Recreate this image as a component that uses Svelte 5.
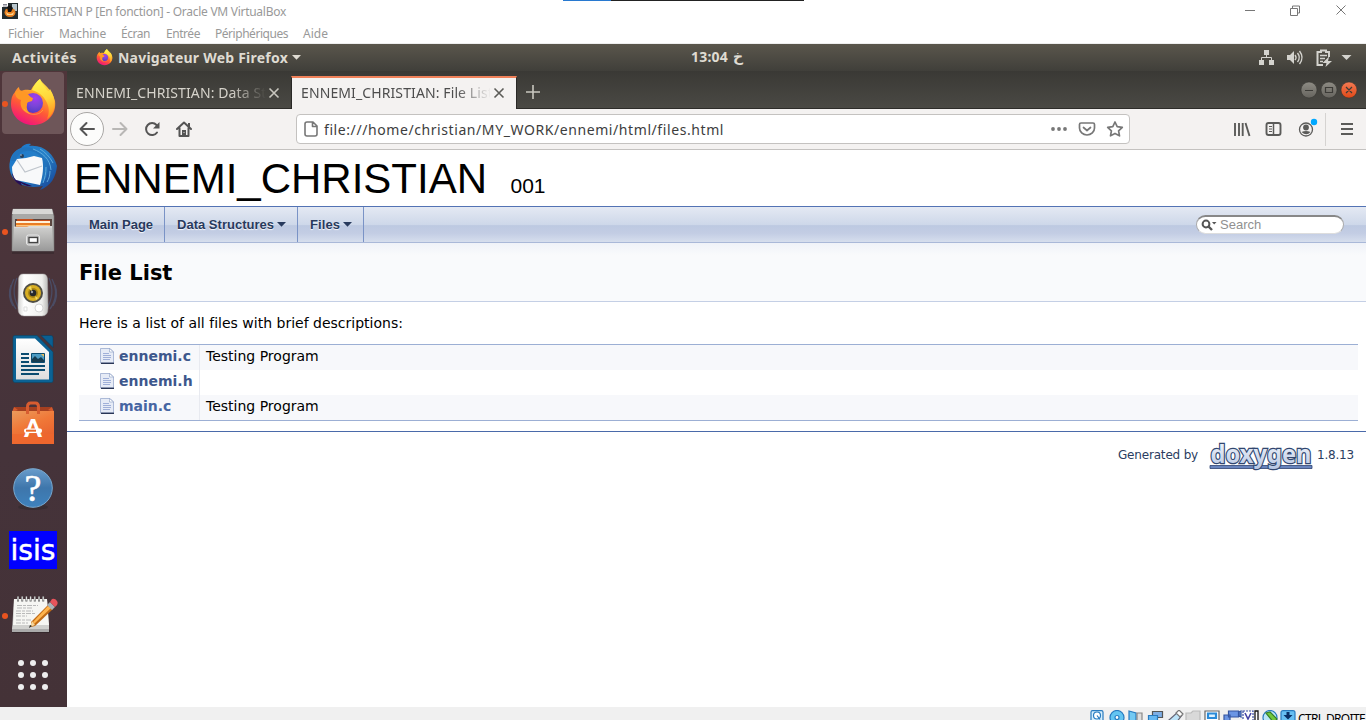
<script>
  const menus = [
    ['Fichier', 36, 8], ['Machine', 47, 15], ['Écran', 29, 15],
    ['Entrée', 34, 16], ['Périphériques', 73, 15], ['Aide', 25, 15]
  ];
  const files = [
    { name: 'ennemi.c', brief: 'Testing Program' },
    { name: 'ennemi.h', brief: '' },
    { name: 'main.c', brief: 'Testing Program', visited: true }
  ];
  const dock = ['firefox', 'thunderbird', 'files', 'rhythmbox', 'writer', 'software', 'help', 'isis', 'notes'];
  const running = ['firefox', 'files', 'notes'];

  // Spreads the letters of a label so that it takes the given width.
  function fit(node, width) {
    const natural = node.getBoundingClientRect().width;
    const count = [...node.textContent].length;
    node.style.letterSpacing = `${(width - natural) / count}px`;
  }
</script>

{#snippet firefox()}
  <defs>
    <linearGradient id="fx-body" x1=".8" y1="0" x2=".35" y2="1">
      <stop offset="0" stop-color="#fff44f" /><stop offset=".35" stop-color="#ffa52a" />
      <stop offset=".65" stop-color="#ff5a36" /><stop offset="1" stop-color="#f0127c" />
    </linearGradient>
    <linearGradient id="fx-flame" x1=".5" y1="0" x2=".7" y2="1">
      <stop offset="0" stop-color="#fff44f" /><stop offset=".5" stop-color="#ffd53a" /><stop offset="1" stop-color="#ff8a1d" />
    </linearGradient>
    <radialGradient id="fx-globe" cx=".6" cy=".25" r=".8">
      <stop offset="0" stop-color="#a43cf0" /><stop offset=".5" stop-color="#7a45d8" /><stop offset="1" stop-color="#4e3bc2" />
    </radialGradient>
  </defs>
  <path fill="url(#fx-body)" d="M6 13c1-2 2-4 4-5 0 2 1 3 2 4 4-2 8-1 10-1 2-4 5-8 9-11 2 5 12 9 15 22 2 14-9 24-22 24C11 46 2 36 2 25c0-5 1-9 4-12z" />
  <path fill="url(#fx-flame)" d="M23 11c2-5 5-9 8-11 1 5 5 7 7 11 2 2 2 1 3-1 7 11 6 24-3 30 3-7 2-13-1-18-3-6-8-9-14-11z" />
  <circle cx="24" cy="24" r="10" fill="url(#fx-globe)" />
  <path fill="#ff9825" d="M6 13c4-3 9-1 12 1 2 3 5 5 6 5l-1 3c-2 1-5 0-5 4-1 4 1 7 4 9-8-1-12-8-10-14-4-1-6-4-6-8z" />
  <path fill="none" stroke="#ffb83b" stroke-width="1" opacity=".6" d="M15 30c3 6 14 8 19 1" />
{/snippet}

{#snippet thunderbird()}
  <defs><linearGradient id="tb" x1="0" y1="0" x2="1" y2="1">
    <stop offset="0" stop-color="#1b77cc" /><stop offset=".5" stop-color="#2680c7" /><stop offset="1" stop-color="#163f92" />
  </linearGradient></defs>
  <path fill="url(#tb)" d="M12 5C14 2 18 0 22 1l-2 2c14-2 25 8 28 20-1 11-6 20-17 24l3-4c-9 2-17 1-25-3C2 35-1 26 1 18 2 12 6 7 12 5z" />
  <path fill="#270e55" d="M3 30l7 8 13 5c-4 1-8-1-11-3l1 3C7 40 4 36 3 30z" />
  <path fill="#2174bd" d="M7 18c1-5 4-9 10-10 8-1 17 4 17 14 0 8-1 14-4 20 14-7 11-30-8-37C14 2 4 7 2 18z" />
  <path fill="none" stroke="#5fa9db" stroke-width="1" d="M24 6c10 4 17 10 18 21M31 6c5 3 10 8 13 14M37 24c0 6-1 11-3 16M41 28c0 4-1 8-3 11" />
  <path fill="#f8f9fa" d="M3 24l5-8 9-1 8-2 8 2c2 8 1 18-2 27L7 37C4 34 3 29 3 24z" />
  <path fill="none" stroke="#bfc5cc" stroke-width="1.200" d="M8 17l8 12 17-6" />
  <circle cx="13" cy="13" r="2" fill="#273f59" /><circle cx="12" cy="12" r=".7" fill="#d3e4f4" />
{/snippet}

{#snippet filesIcon()}
  <defs><linearGradient id="fl" x1="0" y1="0" x2="0" y2="1">
    <stop offset="0" stop-color="#d2d2d0" /><stop offset="1" stop-color="#999" />
  </linearGradient></defs>
  <path fill="#242022" opacity=".35" d="M3 44h42v3H3z" />
  <path fill="#a9a9a7" stroke="#777" stroke-width=".6" d="M4 2h39l2 7v35H3V9z" />
  <path fill="#d8d8d6" d="M4 2h39l1 5H3z" />
  <path fill="#5a4640" d="M6 12h37v10H6z" />
  <path fill="#c84e1a" d="M8 12h15l2 1h16v6H8z" /><path fill="#fff1d8" d="M7 14h34v2H7z" /><path fill="#e97d25" d="M7 16h34v5H7z" /><path fill="#ffc77a" d="M7 18h34v1H7z" />
  <path fill="url(#fl)" d="M5 20h13l2-1h23l1 25H4z" />
  <path fill="none" stroke="#eee" stroke-width=".7" d="M5 20h38" />
  <rect x="17.500" y="28" width="13" height="10" rx="2" fill="#bbb" stroke="#e6e6e6" />
  <rect x="20" y="30.500" width="8.500" height="5" fill="#fff" stroke="#444" stroke-width="1.300" />
{/snippet}

{#snippet rhythmbox()}
  <defs><linearGradient id="rb" x1="0" x2="1"><stop stop-color="#d2d2d0" /><stop offset=".2" stop-color="#fff" /><stop offset=".8" stop-color="#efefed" /><stop offset="1" stop-color="#b9b9b7" /></linearGradient></defs>
  <g fill="none" stroke="#4b648d" stroke-width="1.300" opacity=".5"><path d="M8 7q-7 16 3 32M5 8q-8 16 2 30M2 14q-4 11 2 21M40 7q7 16-3 32M43 8q8 16-2 30M46 14q4 11-2 21" /></g>
  <path fill="url(#rb)" stroke="#aaa" stroke-width=".5" d="M14 3h20q4 0 4.500 5l.5 29q0 8-6 8H15q-6 0-6-8l.5-29Q10 3 14 3z" />
  <circle cx="24" cy="22" r="10" fill="#4f4e46" />
  <circle cx="24" cy="22" r="8" fill="#d8ae22" /><circle cx="24" cy="22" r="5" fill="#a78314" /><circle cx="24" cy="22" r="3.300" fill="#25282c" /><circle cx="23" cy="21" r="1.200" fill="#9fa1a3" />
  <path fill="#f1db63" d="M19 17l4 3-1-5zM29 27l-3-2 1 4z" />
  <circle cx="30" cy="37" r="4" fill="#fff" stroke="#ccc" stroke-width=".8" /><path fill="none" stroke="#ddd" d="M15 36h3v4h-3z" />
{/snippet}

{#snippet writer()}
  <defs><linearGradient id="wr" x1="0" y1="0" x2="0" y2="1"><stop stop-color="#fff" /><stop offset="1" stop-color="#dedede" /></linearGradient></defs>
  <path fill="#0b6294" stroke="#084668" stroke-width=".6" d="M6 .5h22L44 17v29q0 1.500-2 1.500H6q-2 0-2-2V2Q4 .5 6 .5z" />
  <path fill="#0a5f92" stroke="#073d5c" stroke-width=".5" d="M32 .5h10q2 0 2 2v10z" />
  <path fill="url(#wr)" d="M7 3.500h19L40 17v27.500H7z" />
  <g fill="#0b4c70"><path d="M12 18h8v2h-8zM12 22h8v2h-8zM12 26h8v2h-8zM12 30h24v2H12zM12 34h24v2H12zM12 38h18v2H12z" /></g>
  <path fill="#4d9cc4" stroke="#0b4c70" d="M22.500 18.500h13v9h-13z" /><path fill="#173c50" d="M23 27v-3l3-3 3 3 3-2 3 3v2z" /><path fill="#edbd58" d="M32 19h3v3z" />
{/snippet}

{#snippet software()}
  <defs><linearGradient id="sw" x1="0" y1="0" x2=".5" y2="1"><stop stop-color="#eb9b5c" /><stop offset=".5" stop-color="#f07838" /><stop offset="1" stop-color="#e9622e" /></linearGradient></defs>
  <path fill="#a43f20" d="M5 8h38v6H5z" /><path fill="#d35a2d" d="M5 8l4 3-6 2zM43 8l-4 3 6 2z" />
  <path fill="url(#sw)" d="M3 12h42v33H3z" /><path fill="#f0682d" d="M3 35h42v10H3z" opacity=".7" />
  <path fill="none" stroke="#d75c30" stroke-width="3" d="M18.500 15V8q0-4 3-4h5q3 0 3 4v7" />
  <text x="24" y="38" fill="#fff" text-anchor="middle" font-family="Lato" font-size="25" font-weight="900">A</text>
  <rect x="15" y="29.500" width="18" height="4.500" rx="2" fill="#fff" /><path fill="#e86a2d" d="M17 30.700h10v2H17z" />
{/snippet}

{#snippet help()}
  <defs><linearGradient id="hp" x1="0" y1="0" x2="0" y2="1"><stop stop-color="#699ccb" /><stop offset=".5" stop-color="#3e76ab" /><stop offset="1" stop-color="#3e82bd" /></linearGradient></defs>
  <ellipse cx="24" cy="44" rx="15" ry="3" fill="#222" opacity=".35" />
  <circle cx="24" cy="25" r="19.300" fill="url(#hp)" stroke="#79a9cf" stroke-width="1" />
  <text x="24" y="38" fill="#fff" stroke="#fff" stroke-width=".6" text-anchor="middle" font-family="Liberation Serif" font-size="38">?</text>
{/snippet}

{#snippet isis()}
  <path fill="#00f" d="M0 4h48v38H0z" />
  <text x="1.500" y="32.500" fill="#fff" stroke="#fff" stroke-width=".5" font-family="DejaVu Sans" font-size="29" textLength="45" lengthAdjust="spacingAndGlyphs">isis</text>
{/snippet}

{#snippet notes()}
  <path fill="#1f191b" opacity=".4" d="M3 39h38v3H3z" />
  <path fill="#aaa" d="M3 38L5 8h33l2 30v3H3z" /><path fill="#f6f6f3" d="M5 8h33l2 26H4z" /><path fill="#d0d0ce" d="M4 34h36v4H3z" />
  <path stroke="#666" stroke-dasharray="2 2.200" stroke-width="5" d="M8 8h28" /><path stroke="#eee" stroke-dasharray="1 3.200" stroke-width="4" d="M8.500 7.500h28" />
  <g stroke="#aaa" stroke-width=".8" stroke-dasharray="5 1 3 1"><path d="M8 14.500h21M8 17h15M7 20h17M7 22.500h20M7 25h11M7 29h15M7 32h12" /></g>
  <path fill="#c16b16" d="M22 31L39 14l5 4-18 17-4 1z" /><path fill="#ffb44d" d="M24 31L39 15l3 2-17 16z" />
  <path fill="#a9b2b8" d="M38 14l3-3 5 5-3 3z" /><path fill="#e6535b" d="M41 11l2-3q3-1 5 2t-2 6z" /><path fill="#f5d69d" d="M23 30l3 4-5 2z" /><path fill="#222" d="M21 34l2 1-3 2z" />
{/snippet}

{#snippet arrow(cls)}
  <svg class={cls} width="9" height="5" viewBox="0 0 9 5"><path fill="currentColor" d="M0 0h9L4.500 4.800z" /></svg>
{/snippet}

{#snippet cross(cls)}
  <svg class={cls} width="12" height="12" viewBox="0 0 12 12"><path fill="none" stroke="currentColor" stroke-width="1.600" d="M1.500 1.500l9 9M10.500 1.500l-9 9" /></svg>
{/snippet}

<div class="screen">
  <header class="host">
    <div class="titlebar">
      <svg width="16" height="16" viewBox="0 0 16 16"><path fill="#222c30" d="M0 0h16v16H0z" /><path fill="#fff" d="M0 0h6v4H0z" /><path stroke="#556" stroke-width=".7" d="M1 1.500h4M1 3h4" /><path fill="#b7c5cc" d="M10 1h5v7h-5z" /><ellipse cx="8" cy="9.500" rx="5.500" ry="4.500" fill="#e98120" /><path fill="#111" d="M5 4q3-3 6 1l-2 4H6z" /><path fill="#ffd48d" d="M4 9q4 4 8 0l-1 3H5z" /></svg>
      <span class="host-title" use:fit={263}>CHRISTIAN P [En fonction] - Oracle VM VirtualBox</span>
      <svg class="wincontrols" width="106" height="14" viewBox="0 0 106 14"><g fill="none" stroke="#777"><path d="M1 6.500h10M46.500 4.500h7v7h-7zM48.500 4v-2h7v7h-2M92.500 1.500l9 9M101.500 1.500l-9 9" /></g></svg>
      <i class="strip"><b></b></i>
    </div>
    <nav>{#each menus as [label, width, gap]}<span style:margin-left="{gap}px"><span class="fit" use:fit={width}>{label}</span></span>{/each}</nav>
  </header>

  <div class="panel">
    <span class="fit act" use:fit={65}>Activités</span>
    <svg class="mini" width="17" height="17" viewBox="0 0 48 48"><use href="#fx-art" /></svg>
    <span class="fit" use:fit={170}>Navigateur Web Firefox</span>
    {@render arrow('parrow')}
    <span class="clock"><span class="fit" use:fit={37}>13:04</span><span class="ar">خ</span></span>
    <svg class="tray" width="96" height="18" viewBox="0 0 96 18">
      <g fill="#d4d3ce"><path d="M6 1h5v5H6zM1 11h5v5H1zM11 11h5v5h-5z" /><path fill="none" stroke="#d4d3ce" d="M8.500 5v4M3.500 11V8.500h10V11" />
        <path d="M29 6h3l4-4v13l-4-4h-3z" /><path fill="none" stroke="#d4d3ce" stroke-width="1.400" d="M37 6q2 2.500 0 5M39.500 4q3.500 4.500 0 9M41.500 2q5 6.500 0 13" />
        <path fill="none" stroke="#d4d3ce" stroke-width="2" d="M65 16h-5.500V3H63V1.500h5V3h3v5" /><path fill="none" stroke="#d4d3ce" stroke-width="1.400" d="M62 6.500h7M62 9.500h5M62 12.500h3" /><path d="M70.500 8l-6 6h4l-1 4 6.500-6h-4l1-4z" />
        <path d="M83.500 6h10L88.500 11z" /></g>
    </svg>
  </div>

  <div class="guest">
    <aside>
      {#each dock as app}
        <div class="app" class:active={app === 'firefox'}>
          {#if running.includes(app)}<i class="dot"></i>{/if}
          <svg width="48" height="48" viewBox="0 0 48 48">
            {#if app === 'firefox'}<g id="fx-art">{@render firefox()}</g>
            {:else if app === 'thunderbird'}{@render thunderbird()}
            {:else if app === 'files'}{@render filesIcon()}
            {:else if app === 'rhythmbox'}{@render rhythmbox()}
            {:else if app === 'writer'}{@render writer()}
            {:else if app === 'software'}{@render software()}
            {:else if app === 'help'}{@render help()}
            {:else if app === 'isis'}{@render isis()}
            {:else}{@render notes()}{/if}
          </svg>
        </div>
      {/each}
      <div class="grid">{#each Array(9) as _}<i></i>{/each}</div>
    </aside>

    <main>
      <div class="tabs">
        <div class="tab"><span class="clip dark"><span class="fit" use:fit={205}>ENNEMI_CHRISTIAN: Data Stru</span></span>{@render cross('x')}</div>
        <div class="tab current"><span class="clip"><span class="fit" use:fit={192}>ENNEMI_CHRISTIAN: File List</span></span>{@render cross('x')}</div>
        <svg class="plus" width="14" height="14" viewBox="0 0 14 14"><path stroke="#c9c7bf" stroke-width="1.600" d="M7 0v14M0 7h14" /></svg>
        <div class="wm">
          <svg width="58" height="18" viewBox="0 0 58 18">
            <defs><linearGradient id="gb" x2="0" y2="1"><stop stop-color="#8e8c84" /><stop offset="1" stop-color="#66645e" /></linearGradient><linearGradient id="rbn" x2="0" y2="1"><stop stop-color="#f47b54" /><stop offset="1" stop-color="#df4817" /></linearGradient></defs>
            <circle cx="9" cy="9" r="8" fill="url(#gb)" stroke="#31302c" stroke-width=".5" /><circle cx="29" cy="9" r="8" fill="url(#gb)" stroke="#31302c" stroke-width=".5" /><circle cx="49" cy="9" r="8" fill="url(#rbn)" stroke="#31302c" stroke-width=".5" />
            <path fill="none" stroke="#3c3b37" stroke-width="1.200" d="M5 9.500h8M25.500 6.500h7v5h-7zM46 6l6 6M52 6l-6 6" />
          </svg>
        </div>
      </div>

      <div class="toolbar">
        <div class="back"><svg width="16" height="16" viewBox="0 0 16 16"><path fill="none" stroke="#555" stroke-width="2" stroke-linecap="round" stroke-linejoin="round" d="M15 8H1.500M7.500 2l-6 6 6 6" /></svg></div>
        <svg class="fwd" width="16" height="16" viewBox="0 0 16 16"><path fill="none" stroke="#b8b7b5" stroke-width="2" stroke-linecap="round" stroke-linejoin="round" d="M1 8h13.500M8.500 2l6 6-6 6" /></svg>
        <svg class="reload" width="16" height="16" viewBox="0 0 16 16"><path fill="none" stroke="#555" stroke-width="2" stroke-linecap="round" d="M13 11.500A6 6 0 1 1 12.500 4" /><path fill="#555" d="M15.500 1v6.500H9z" /></svg>
        <svg class="home" width="16" height="16" viewBox="0 0 16 16"><path fill="none" stroke="#555" stroke-width="2" stroke-linecap="round" stroke-linejoin="round" d="M1 8l7-6.500L15 8M3.500 7v8h9V7" /><path fill="#555" d="M6 9h4v6H6zM12 2h2v4h-2z" /><path fill="#ddd" d="M7.500 11h1v1h-1z" /></svg>
        <div class="url">
          <svg class="doc" width="14" height="16" viewBox="0 0 14 16"><path fill="none" stroke="#777" stroke-width="1.600" stroke-linejoin="round" d="M3 1h6l4 4v8q0 2-2 2H3q-2 0-2-2V3q0-2 2-2zM8.500 1v4.500H13" /></svg>
          <span class="fit" use:fit={400}>file:///home/christian/MY_WORK/ennemi/html/files.html</span>
          <svg class="actions" width="74" height="18" viewBox="0 0 74 18"><g fill="#777"><circle cx="3" cy="9" r="1.900" /><circle cx="9" cy="9" r="1.900" /><circle cx="15" cy="9" r="1.900" /></g><g fill="none" stroke="#777" stroke-width="1.700" stroke-linecap="round" stroke-linejoin="round"><path d="M31 3h12q1.500 0 1.500 1.500V8a7.500 7 0 0 1-15 0V4.500Q29.500 3 31 3zM33.500 7.500L37 10.500l3.500-3" /><path d="M65 2l2.200 4.600 5.100.700-3.700 3.500.9 5L65 13.400l-4.500 2.400.9-5-3.700-3.500 5.100-.7z" /></g></svg>
        </div>
        <svg class="tools" width="122" height="36" viewBox="0 0 122 36">
          <g fill="none" stroke="#5b5b59" stroke-width="1.900"><path d="M2 12v13M6 12v13M9.700 12v13M12.500 12l4 13" /><rect x="33.500" y="12" width="14" height="12" rx="2" /><path d="M40.500 12v12" stroke-width="1.500" /><path stroke-width="1" d="M36 15.500h3M36 18h3M36 20.500h3" /></g>
          <circle cx="73" cy="18.500" r="6.500" fill="none" stroke="#5b5b59" stroke-width="1.300" /><circle cx="73" cy="16.500" r="2.900" fill="#5b5b59" /><path fill="#5b5b59" d="M68.500 21q4.500-2 9 0-4 4.500-9 0z" /><circle cx="81" cy="11" r="3.200" fill="#00a8ff" />
          <path stroke="#d5d3d1" d="M92.500 2v33" /><path stroke="#5b5b59" stroke-width="2" d="M108 13h12M108 18h12M108 23h12" />
        </svg>
      </div>

      <div class="page">
        <div class="project"><span class="fit" use:fit={413}>ENNEMI_CHRISTIAN</span><small>001</small></div>
        <nav class="doxnav">
          <span class="item first"><span class="fit" use:fit={64}>Main Page</span></span>
          <span class="item"><span class="fit" use:fit={97}>Data Structures</span>{@render arrow('down')}</span>
          <span class="item"><span class="fit" use:fit={30}>Files</span>{@render arrow('down')}</span>
          <div class="search"><svg width="16" height="13" viewBox="0 0 16 13"><circle cx="5" cy="5" r="3.400" fill="none" stroke="#555" stroke-width="2" /><path stroke="#555" stroke-width="2.400" d="M7.500 7.500l3.500 3.500" /><path fill="#555" d="M11 3h4.500L13.200 5.600z" /></svg><span>Search</span></div>
        </nav>
        <div class="heading">File List</div>
        <div class="contents">
          <p><span class="fit" use:fit={324}>Here is a list of all files with brief descriptions:</span></p>
          <div class="table">
            {#each files as file}
              <div class="row">
                <div class="entry">
                  <svg width="14" height="16" viewBox="0 0 14 16"><path fill="#e6ebf6" stroke="#9babce" stroke-width=".8" d="M.5.500H10L13.500 4v11H.5z" /><path fill="#fff" stroke="#8c9dc4" stroke-width=".6" d="M9.500.500V4h4z" /><path stroke="#8da0d0" stroke-width=".8" d="M3 5.500h6M3 7.500h8M3 9.500h8M3 11.500h7" /><path stroke="#1f2c4d" stroke-width="1.300" d="M1 15.300h13" /></svg>
                  <b class:visited={file.visited}>{file.name}</b>
                </div>
                <span class="brief">{file.brief}</span>
              </div>
            {/each}
          </div>
        </div>
        <footer>
          <span class="fit" use:fit={80}>Generated by</span>
          <svg class="logo" width="104" height="27" viewBox="0 0 104 27">
            <defs><linearGradient id="dx" x2="0" y2="1"><stop stop-color="#fff" /><stop offset="1" stop-color="#b5c5e3" /></linearGradient></defs>
            <path fill="#6884bd" stroke="#2d4371" stroke-width=".8" d="M1 22.500h102v3H1z" />
            <text x="1.500" y="19.500" font-family="Noto Sans" font-weight="bold" font-size="25" textLength="101" lengthAdjust="spacingAndGlyphs" fill="url(#dx)" stroke="#31466f" stroke-width="2.400" paint-order="stroke">doxygen</text>
          </svg>
          <span class="fit" use:fit={37}>1.8.13</span>
        </footer>
      </div>
    </main>
  </div>

  <div class="status">
    <svg width="206" height="10" viewBox="0 0 206 10">
      <g stroke="#287bc0" stroke-width="1.200" fill="#d5effd">
        <rect x="1" y=".7" width="12" height="13" rx="1.500" /><circle cx="7" cy="5.500" r="3.500" fill="#fff" /><path d="M7 5.500l3 4" />
        <circle cx="27" cy="7.500" r="7" fill="#63c5f2" /><circle cx="27" cy="7.500" r="2" fill="#fff" />
        <path fill="#72c9f2" d="M39 1l7 2v9h-7z" /><path stroke="#888" fill="#ddd" d="M47 3h5v9h-5z" />
        <path fill="#7eaee5" stroke="#555" d="M62.500 1.500h10v6h-10z" /><path fill="#65b8f3" d="M58.500 5.500h9v7h-9z" />
        <path fill="#bce3f8" stroke="#667" d="M79 10l9-8 4 3-6 8z" /><path fill="#fff" stroke="#777" d="M86 3l3-3 4 4-3 3z" />
        <path fill="#d9d9d9" stroke="#bbb" d="M96 3h5l2-2h7v12H96z" />
        <path fill="#fff" stroke="#666" d="M115 1h14v12h-14z" /><path fill="#dff3ff" stroke="#2b8bd8" stroke-width="2.200" d="M118 3.500h8v4.500h-8z" />
        <path fill="#6b95e4" stroke="#3555a0" d="M138.500 1h10v6h-10zM134 5h6v6h-6zM149 2l2-1v6l-2-1z" />
        <path fill="#fff" stroke="#384ea5" stroke-dasharray="2 1" d="M153 1h10v12h-10z" /><path fill="none" stroke="#4544a5" stroke-width="1.600" d="M155 3l3 6 3-6" /><path fill="#fff" stroke="#111" stroke-width="1.300" d="M165 1h3v13h-3z" />
        <circle cx="180" cy="7.500" r="7" fill="#b9e5f6" /><path fill="#71c83b" stroke="#347d27" d="M176 3l4-1 7 7-3 4z" />
        <rect x="191" y=".7" width="14" height="13" rx="2" fill="#67bff3" /><path fill="#092f66" stroke="none" d="M196.500 2h3v3h3l-4.500 4.500-4.500-4.500h3z" />
      </g>
    </svg>
    <span class="fit" use:fit={67}>CTRL DROITE</span>
  </div>
</div>

<style>
  :global(body) { margin: 0; overflow: hidden; background: #fff; }
  .screen { width: 1366px; height: 720px; display: flex; flex-direction: column; overflow: hidden; font-family: 'Noto Sans', sans-serif; }
  .screen * { box-sizing: border-box; }
  svg { display: block; flex: none; }
  .fit { display: inline-block; white-space: pre; flex: none; }

  .host { height: 44px; flex: none; background: #fff; font: 12px 'Noto Sans', sans-serif; color: #999; border-bottom: 1px solid #eee; }
  .titlebar { display: flex; align-items: center; height: 22px; padding-left: 2px; position: relative; }
  .host-title { margin-left: 5px; line-height: 22px; white-space: pre; margin-top: 2px; }
  .wincontrols { margin-left: auto; margin-right: 16px; }
  .strip { position: absolute; left: 563px; top: 0; width: 241px; height: 1px; background: #222; }
  .strip b { display: block; width: 48px; height: 1px; background: #2879d0; }
  .host nav { display: flex; height: 22px; line-height: 23px; }

  .panel { height: 27px; flex: none; display: flex; align-items: center; position: relative; background: linear-gradient(#5a564c, #403f3a); color: #dfdbd2; font: 700 14px 'Noto Sans', sans-serif; padding-left: 12px; }
  .mini { margin: 0 5px 0 19px; }
  .parrow { margin-left: 4px; }
  .clock { position: absolute; left: 691px; top: 0; line-height: 26px; display: flex; }
  .ar { margin-left: 5px; font-family: 'DejaVu Sans', sans-serif; font-size: 14px; }
  .tray { margin-left: auto; margin-right: 12px; }

  .guest { display: flex; height: 636px; flex: none; }
  aside { width: 67px; flex: none; display: flex; flex-direction: column; background: linear-gradient(#4f353a, #45333a 60%, #443237); }
  .app { width: 62px; height: 62px; flex: none; margin: 1px 3px 1px 2px; border-radius: 4px; display: grid; place-items: center; position: relative; }
  .app svg { overflow: visible; }
  .active { background: #6e5659; }
  .dot { position: absolute; left: 0; top: 28.500px; width: 6px; height: 6px; border-radius: 50%; background: #e95420; }
  .grid { height: 60px; padding: 13px 0 0 18px; display: grid; grid-template-columns: repeat(3, 6px); grid-auto-rows: 6px; gap: 6px; }
  .grid i { background: #eee; border-radius: 50%; }

  main { flex: 1; min-width: 0; background: #fff; }
  .tabs { height: 38px; display: flex; background: linear-gradient(#3a3935, #4a4944); color: #d6d3cb; font-size: 14px; border-bottom: 1px solid #2d2c29; }
  .tab { width: 224px; height: 37px; display: flex; align-items: center; padding: 6px 11px 0 9px; }
  .clip { width: 190px; overflow: hidden; white-space: nowrap; line-height: 22px; mask-image: linear-gradient(90deg, #000 155px, transparent 190px); }
  .x { margin-left: 2px; color: #c9c7bf; }
  .current { width: 226px; height: 33px; margin-top: 5px; border-top: 2px solid #f0815a; background: #f4f2f1; color: #4d4d4d; padding-top: 0; padding-bottom: 1px; border-left: 1px solid #292826; border-right: 1px solid #292826; }
  .current .x { color: #5c5c58; margin-left: 3px; }
  .plus { margin: 14px 0 0 9px; }
  .wm { margin: 10px 8px 0 auto; }

  .toolbar { height: 41px; display: flex; align-items: center; background: #f4f2f1; border-bottom: 1px solid #c4c2c0; }
  .back { width: 34px; height: 34px; margin-left: 3px; border: 1px solid #a9a7a5; border-radius: 50%; background: #fcfcfb; display: grid; place-items: center; }
  .fwd { margin-left: 8px; }
  .reload { margin-left: 16px; }
  .home { margin-left: 16px; }
  .url { width: 834px; height: 30px; margin-left: 104px; padding: 0 5px 0 7px; border: 1px solid #c4c2c0; border-radius: 4px; background: #fff; display: flex; align-items: center; color: #3d3d3d; font-size: 14px; }
  .doc { margin-right: 6px; }
  .actions { margin-left: auto; }
  .tools { margin: 0 11px 0 auto; }

  .page { font: 14px/22px 'DejaVu Sans', sans-serif; color: #000; }
  .project { height: 56px; padding-left: 7px; font: 42px/57px 'Liberation Sans', sans-serif; display: flex; align-items: baseline; }
  .project small { font-size: 21px; margin-left: 23.500px; }
  .doxnav { height: 37px; display: flex; border-top: 1px solid #5373b4; border-bottom: 1px solid #a9b8d8; background: linear-gradient(#e4e9f3, #cdd7e9 52%, #bdc9e1 53%, #c3cde4 75%, #d6deed); font: bold 13px/36px 'Liberation Sans', sans-serif; color: #283a5d; text-shadow: 0 1px 1px rgba(255, 255, 255, .9); }
  .item { display: flex; align-items: center; padding: 0 11px 0 12px; border-right: 1px solid #7a93c6; }
  .item .fit { padding-top: 1px; }
  .first { padding-left: 22px; padding-right: 11px; }
  .down { margin-left: 3px; }
  .search { margin: 8px 22px 0 auto; width: 148px; height: 19px; border-radius: 10px; background: #fff; border: 1px solid #aaa; border-top: 2px solid #888; border-bottom-color: #ddd; display: flex; align-items: center; padding-left: 4px; font: 13px/16px 'Liberation Sans', sans-serif; color: #909090; text-shadow: none; }
  .search span { margin-left: 3px; }
  .heading { height: 59px; padding-left: 12px; background: linear-gradient(#eff2f8, #f9fafc 12px); border-bottom: 1px solid #c4cfe5; font: bold 21px/60px 'DejaVu Sans', sans-serif; }
  .contents { padding: 10px 8px 0 12px; }
  p { margin: 0; height: 32px; }
  .table { border-top: 1px solid #9cafd4; border-bottom: 1px solid #9cafd4; height: 77px; }
  .row { display: flex; height: 25px; }
  .row:nth-child(odd) { background: #f7f8fb; }
  .entry { width: 121px; display: flex; padding: 3px 0 0 21px; border-right: 1px solid #e8eaf0; }
  .entry b { margin-left: 5px; line-height: 17px; color: #3d578c; }
  .entry .visited { color: #4665a2; }
  .brief { padding-left: 6px; line-height: 23px; }
  footer { margin-top: 10px; height: 47px; border-top: 1px solid #4a6aaa; display: flex; justify-content: flex-end; align-items: center; padding: 0 12px 0 0; font-size: 12px; color: #2a3d61; }
  .logo { margin: 2px 4px 0 11px; overflow: visible; }

  .status { height: 13px; flex: none; background: #f0f0f0; display: flex; justify-content: flex-end; padding: 3px 1px 0 0; overflow: hidden; font-size: 12px; color: #000; }
  .status svg { margin-right: 2px; }
  .status .fit { line-height: 17px; }
</style>
